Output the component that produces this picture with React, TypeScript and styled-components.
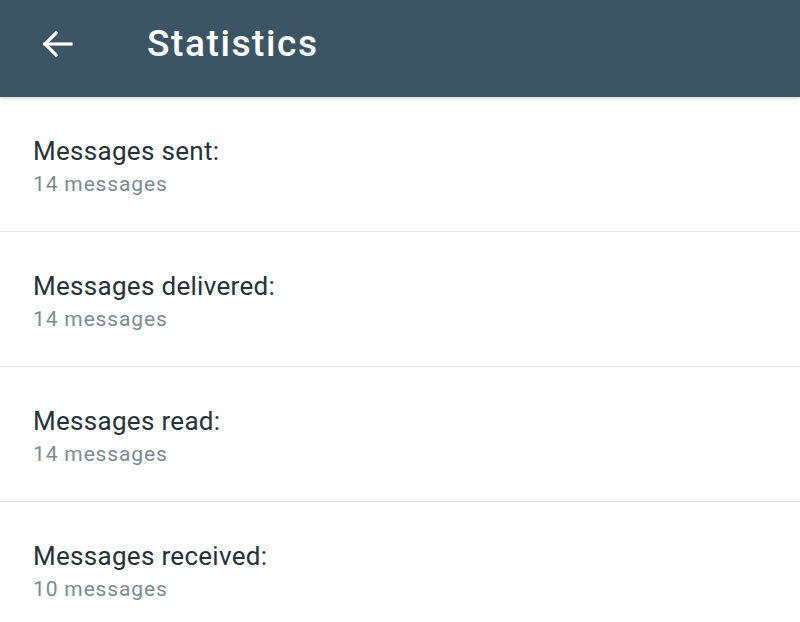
import React from "react";
import styled, { createGlobalStyle } from "styled-components";

const Global = createGlobalStyle`
  html, body { margin: 0; padding: 0; background: #ffffff; }
  body { font-family: Roboto, "Noto Sans", sans-serif; -webkit-font-smoothing: antialiased; }
`;

const Page = styled.div`
  width: 800px;
  height: 622px;
  overflow: hidden;
  background: #ffffff;
  display: flex;
  flex-direction: column;
`;

const AppBar = styled.header`
  height: 97px;
  flex: 0 0 97px;
  box-sizing: border-box;
  background: #3b5564;
  display: flex;
  align-items: center;
  padding: 0 0 10px 41px;
  box-shadow: 0 1px 4px rgba(0, 0, 0, 0.2);
  position: relative;
  z-index: 1;
`;

const BackButton = styled.button`
  width: 32px;
  height: 28px;
  padding: 0;
  border: none;
  background: transparent;
  display: flex;
  align-items: center;
  justify-content: center;
  color: #ffffff;
`;

const Title = styled.h1`
  margin: 0 0 0 74px;
  font-family: Roboto, sans-serif;
  font-weight: 500;
  font-size: 37px;
  line-height: 44px;
  color: #ffffff;
  letter-spacing: 1.6px;
`;

const List = styled.ul`
  list-style: none;
  margin: 0;
  padding: 0;
`;

const Row = styled.li`
  box-sizing: border-box;
  height: 135px;
  border-bottom: 1px solid #e4e4e6;
  padding: 39px 0 0 33px;
  display: flex;
  flex-direction: column;
`;

const Label = styled.div`
  font-size: 26px;
  line-height: 30px;
  letter-spacing: 0.3px;
  color: #263238;
`;

const Value = styled.div`
  font-size: 21px;
  line-height: 36px;
  letter-spacing: 0.85px;
  color: #7d8a92;
`;

const stats = [
  { label: "Messages sent:", value: "14 messages" },
  { label: "Messages delivered:", value: "14 messages" },
  { label: "Messages read:", value: "14 messages" },
  { label: "Messages received:", value: "10 messages" },
];

export default function App() {
  return (
    <Page>
      <Global />
      <AppBar>
        <BackButton aria-label="Back">
          <svg width="32" height="28" viewBox="0 0 32 28" fill="none" stroke="#ffffff" strokeWidth="3.2" strokeLinecap="square">
            <path d="M30 14H4" />
            <path d="M15 3L4 14l11 11" strokeLinejoin="miter" />
          </svg>
        </BackButton>
        <Title>Statistics</Title>
      </AppBar>
      <List>
        {stats.map((s) => (
          <Row key={s.label}>
            <Label>{s.label}</Label>
            <Value>{s.value}</Value>
          </Row>
        ))}
      </List>
    </Page>
  );
}
